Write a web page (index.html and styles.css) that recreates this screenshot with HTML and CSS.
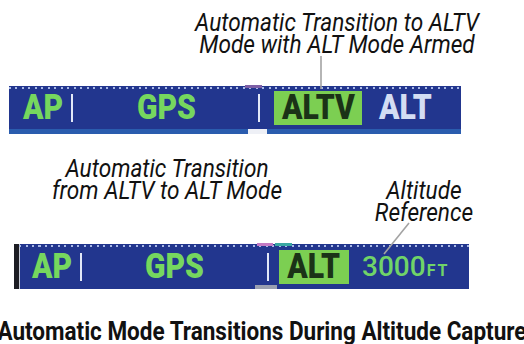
FILE: index.html
```html
<!DOCTYPE html>
<html lang="en">
<head>
<meta charset="UTF-8">
<title>Automatic Mode Transitions During Altitude Capture</title>
<link rel="stylesheet" href="styles.css">
</head>
<body>
 <div class="figure">
  <p class="note note-top">Automatic Transition to ALTV<br>Mode with ALT Mode Armed</p>

  <div class="bar bar-one">
    <span class="mode ap"><b>AP</b></span>
    <span class="sep"></span>
    <span class="mode gps"><b>GPS</b></span>
    <span class="sep"></span>
    <span class="mode active"><b>ALTV</b></span>
    <span class="mode armed"><b>ALT</b></span>
    <span class="mark mark-purple"></span>
    <span class="tick"></span>
  </div>

  <div class="notes-row">
    <p class="note note-left">Automatic Transition<br>from ALTV to ALT Mode</p>
    <p class="note note-right">Altitude<br>Reference</p>
  </div>

  <div class="bar bar-two">
    <span class="mode ap"><b>AP</b></span>
    <span class="sep"></span>
    <span class="mode gps"><b>GPS</b></span>
    <span class="sep"></span>
    <span class="mode active"><b>ALT</b></span>
    <span class="ref">3000<small>FT</small></span>
    <span class="mark mark-pink"></span>
    <span class="mark mark-teal"></span>
    <span class="tick"></span>
  </div>

  <div class="title-wrap">
    <h1 class="title">Automatic Mode Transitions During Altitude Capture</h1>
  </div>

  <svg class="leaders" width="524" height="344" viewBox="0 0 524 344">
    <line x1="321" y1="56" x2="321" y2="89"/>
    <line x1="409" y1="223" x2="384" y2="254"/>
  </svg>
 </div>
</body>
</html>
```

FILE: styles.css
```css
body{margin:0;background:#fff;font-family:Roboto,"Liberation Sans",sans-serif;width:524px;height:344px;overflow:hidden}
.figure{position:relative;width:524px;height:344px}

.note{margin:0;font-size:26px;line-height:22px;font-style:italic;color:#111;text-align:center;transform:scaleX(.87)}
.note-top{width:360px;margin-left:157px;padding-top:11px}
.notes-row{display:flex;margin-top:23px}
.note-left{width:290px;margin-left:22px}
.note-right{width:130px;margin-left:47px;margin-top:22px}

.bar{position:relative;display:flex;align-items:center;background:#22368e;color:#76d75e}
.bar::before{content:"";position:absolute;top:1px;left:0;right:0;height:2px;background:repeating-linear-gradient(to right,#a8b8e6 0 2px,transparent 2px 6.5px)}
.bar-one{margin:31px 0 0 9px;width:438px;height:43px;padding-left:14px;border-bottom:5px solid #2a5cae}
.bar-two{margin:21px 0 0 14px;width:437px;height:45px;padding-left:13px;border-left:5px solid #1d1d24;box-shadow:inset 1px 0 #c9cdd8}

.mode{font-size:35px;font-weight:700;line-height:1}
.mode b{display:inline-block;transform:scaleX(.86);transform-origin:left center}
.ap{width:48px}
.gps{margin-left:64px;width:121px}
.bar-two .gps{margin-left:63px;width:122px}
.sep{width:2px;height:28px;background:#e2e8f7}
.active{margin-left:14px;width:88px;height:34px;display:flex;align-items:center;justify-content:center;background:#7ccf52;color:#1b3317}
.active b{transform-origin:center}
.bar-two .active{margin-left:10px;width:70px}
.armed{margin-left:17px;color:#d3ddf3}
.ref{margin-left:13px;font-size:28px;font-weight:500;line-height:1;color:#70d468}
.ref small{font-size:16px;font-weight:700;letter-spacing:2px;margin-left:1px}

.mark{position:absolute;top:-1px;height:3px}
.mark-purple{left:236px;width:17px;background:#7d5fa6}
.mark-pink{left:238px;width:16px;background:#c47ac4}
.mark-teal{left:256px;width:17px;background:#3aa7a2}
.tick{position:absolute;bottom:-5px;left:239px;width:19px;height:5px;background:#eef0f6}
.bar-two .tick{bottom:0;left:236px;width:22px;height:4px;background:#9aa0b0}

.title-wrap{display:flex;justify-content:center;margin-top:29px}
.title{margin:0;flex:none;white-space:nowrap;font-size:25px;line-height:28px;font-weight:700;color:#111;transform:scaleX(.9)}

.leaders{position:absolute;top:0;left:0;pointer-events:none}
.leaders line{stroke:#a3a3a3;stroke-width:1.6}
```
